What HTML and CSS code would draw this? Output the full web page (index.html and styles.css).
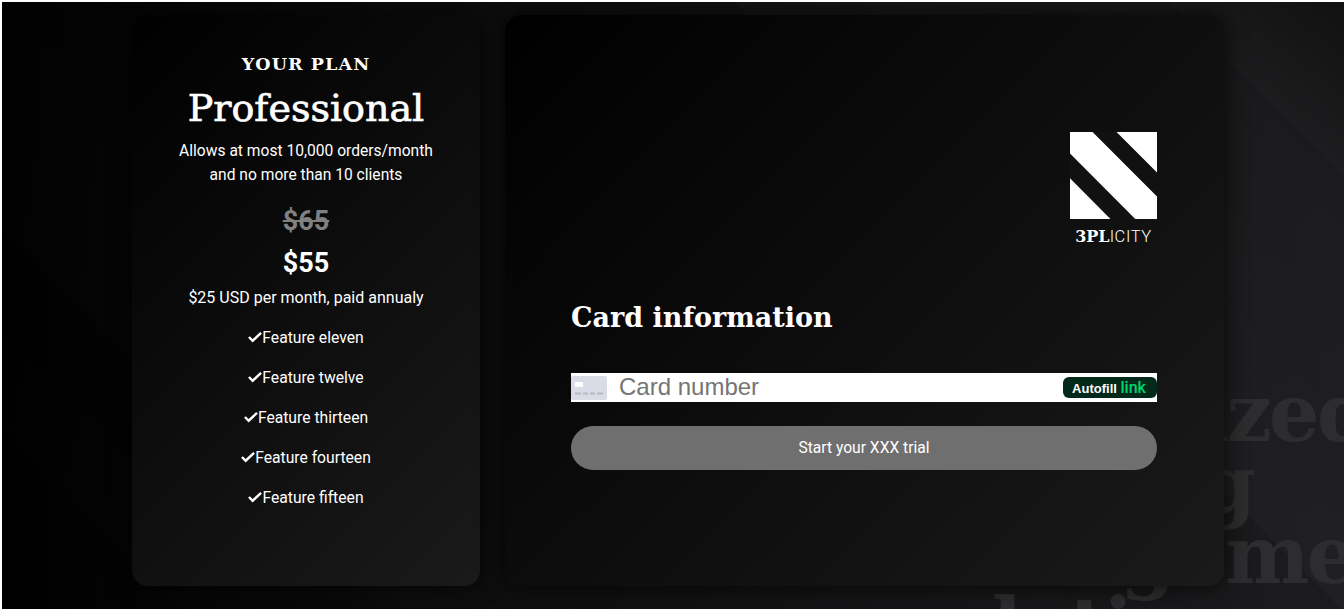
FILE: index.html
```html
<!DOCTYPE html>
<html lang="en">
<head>
  <meta charset="UTF-8" />
  <meta name="viewport" content="width=device-width, initial-scale=1.0"/>
  <title>Checkout</title>
  <link rel="stylesheet" href="styles.css">
</head>
<body>
  <div class="page">
    <div class="hero-text hero-1">ized</div>
    <div class="hero-text hero-2">g</div>
    <div class="hero-text hero-3">g<span class="gap-word">me</span></div>
    <div class="hero-text hero-4">l<span class="gap-t">t</span><span class="gap-i">i</span></div>

    <div class="container">
      <div class="card plan">
        <h4 class="plan-label">YOUR PLAN</h4>
        <h1 class="plan-name">Professional</h1>
        <p class="plan-desc">Allows at most 10,000 orders/month<br>and no more than 10 clients</p>
        <p class="price-old">$65</p>
        <p class="price-new">$55</p>
        <p class="price-note">$25 USD per month, paid annualy</p>
        <ul class="features">
          <li><svg class="check" viewBox="0 0 15 12"><path d="M1 6 L5 10 L14 1.5" /></svg>Feature eleven</li>
          <li><svg class="check" viewBox="0 0 15 12"><path d="M1 6 L5 10 L14 1.5" /></svg>Feature twelve</li>
          <li><svg class="check" viewBox="0 0 15 12"><path d="M1 6 L5 10 L14 1.5" /></svg>Feature thirteen</li>
          <li><svg class="check" viewBox="0 0 15 12"><path d="M1 6 L5 10 L14 1.5" /></svg>Feature fourteen</li>
          <li><svg class="check" viewBox="0 0 15 12"><path d="M1 6 L5 10 L14 1.5" /></svg>Feature fifteen</li>
        </ul>
      </div>

      <div class="card payment">
        <div class="logo">
          <svg class="logo-mark" viewBox="0 0 86 86">
            <rect width="86" height="86" fill="#fff" />
            <path d="M22.3 0 L46 0 L86 40 L86 63.7 Z M0 21.3 L0 45.7 L40 86 L64.5 86 Z" fill="#111" />
          </svg>
          <div class="logo-text"><b>3PL</b>ICITY</div>
        </div>
        <h2 class="card-title">Card information</h2>
        <div class="card-input">
          <svg class="card-icon" viewBox="0 0 36 24">
            <rect width="36" height="24" rx="2" fill="#d9dce4" />
            <rect x="4" y="6" width="8" height="5" fill="#fff" />
            <path d="M4 17.5h6M12 17.5h5M19 17.5h5M26 17.5h6" stroke="#b5b9c4" stroke-width="2" />
          </svg>
          <span class="placeholder">Card number</span>
          <span class="autofill">Autofill <em>link</em></span>
        </div>
        <button class="start-btn">Start your XXX trial</button>
      </div>
    </div>
  </div>
</body>
</html>
```

FILE: styles.css
```css
* {
  box-sizing: border-box;
}
html, body {
  margin: 0;
  padding: 0;
  height: 100%;
  background: #fff;
}
body {
  font-family: Roboto, sans-serif;
  color: #fff;
  overflow: hidden;
}
.page {
  position: relative;
  margin: 2px 0 0 2px;
  height: 607px;
  overflow: hidden;
  background:
    linear-gradient(45deg, transparent 1240px, rgba(0, 0, 0, 0.4) 1378px),
    linear-gradient(45deg,
      transparent 127px, rgba(255, 255, 255, 0.005) 127px,
      transparent 268px, rgba(255, 255, 255, 0.007) 268px,
      transparent 947px, rgba(255, 255, 255, 0.02) 947px,
      rgba(255, 255, 255, 0) 1255px, rgba(255, 255, 255, 0.012) 1255px,
      transparent 1378px),
    linear-gradient(90deg, #000 0%, #0b0b0c 30%, #151517 70%, #1c1c1e 100%);
}
.hero-text {
  position: absolute;
  font-family: "Roboto Slab", "DejaVu Serif", serif;
  font-weight: 700;
  font-size: 80px;
  line-height: 72px;
  letter-spacing: -3px;
  white-space: nowrap;
  color: #2d2d2f;
}
.hero-1 {
  left: 1197px;
  top: 375px;
}
.hero-2 {
  left: 1198px;
  top: 446px;
}
.hero-3 {
  left: 1118px;
  top: 517px;
}
.hero-4 {
  left: 990px;
  top: 589px;
}
.gap-word {
  margin-left: 52px;
}
.gap-t {
  margin-left: 50px;
}
.gap-i {
  margin-left: 0;
}
.container {
  position: relative;
  display: flex;
  gap: 25px;
  margin-left: 130px;
  padding-top: 13px;
  width: 1092px;
}
.card {
  height: 571px;
  border-radius: 16px;
  background: linear-gradient(135deg, #000 0%, #1a1a1a 100%);
  box-shadow: 0 0 24px rgba(0, 0, 0, 0.75);
}
.plan {
  width: 348px;
  padding-top: 38px;
  text-align: center;
}
.plan-label {
  margin: 0;
  font-family: "Roboto Slab", "DejaVu Serif", serif;
  font-size: 17.5px;
  line-height: 22px;
  font-weight: 700;
  letter-spacing: 1.1px;
}
.plan-name {
  margin: 9px 0 0;
  font-family: "Roboto Slab", "DejaVu Serif", serif;
  font-size: 38px;
  line-height: 48px;
  font-weight: 400;
  -webkit-text-stroke: 0.7px #fff;
}
.plan-desc {
  margin: 7px 0 0;
  font-size: 15.6px;
  line-height: 24px;
}
.price-old {
  margin: 17px 0 0;
  font-size: 27px;
  line-height: 34px;
  font-weight: 700;
  color: #808080;
  text-decoration: line-through;
}
.price-new {
  margin: 8px 0 0;
  font-size: 27px;
  line-height: 34px;
  font-weight: 700;
}
.price-note {
  margin: 6px 0 0;
  font-size: 16px;
  line-height: 24px;
}
.features {
  list-style: none;
  margin: 8px 0 0;
  padding: 0;
}
.features li {
  height: 40px;
  font-size: 15.7px;
  line-height: 40px;
}
.check {
  width: 14px;
  height: 12px;
  fill: none;
  stroke: #fff;
  stroke-width: 2.6;
}
.payment {
  width: 719px;
  padding: 117px 67px 0 66px;
}
.logo {
  width: 87px;
  margin-left: auto;
}
.logo-mark {
  display: block;
  width: 87px;
  height: 87px;
}
.logo-text {
  margin-top: 7px;
  text-align: center;
  font-size: 16.5px;
  line-height: 21px;
  letter-spacing: 0.6px;
  font-weight: 300;
  white-space: nowrap;
}
.logo-text b {
  font-family: "Roboto Slab", "DejaVu Serif", serif;
  font-size: 16px;
  letter-spacing: 0;
  font-weight: 700;
}
.card-title {
  margin: 50px 0 0;
  font-family: "Roboto Slab", "DejaVu Serif", serif;
  font-size: 27px;
  line-height: 42px;
  font-weight: 700;
}
.card-input {
  display: flex;
  align-items: center;
  height: 29px;
  margin-top: 34px;
  background: #fff;
}
.card-icon {
  width: 36px;
  height: 24px;
  flex: none;
}
.placeholder {
  margin-left: 12px;
  margin-bottom: 2px;
  font-family: "Liberation Sans", Arial, sans-serif;
  font-size: 24px;
  color: #757575;
}
.autofill {
  margin-left: auto;
  width: 94px;
  height: 21px;
  padding-right: 2px;
  border-radius: 6px;
  background: #03291a;
  color: #fff;
  font-family: "Liberation Sans", Arial, sans-serif;
  font-size: 13px;
  font-weight: 700;
  line-height: 21px;
  text-align: center;
}
.autofill em {
  font-family: Roboto, sans-serif;
  font-style: normal;
  font-weight: 500;
  font-size: 16px;
  color: #00d66f;
}
.start-btn {
  display: block;
  width: 100%;
  height: 44px;
  margin-top: 24px;
  border: none;
  border-radius: 22px;
  background: #6f6f6f;
  color: #fff;
  font-family: Roboto, sans-serif;
  font-size: 15.6px;
}
```
